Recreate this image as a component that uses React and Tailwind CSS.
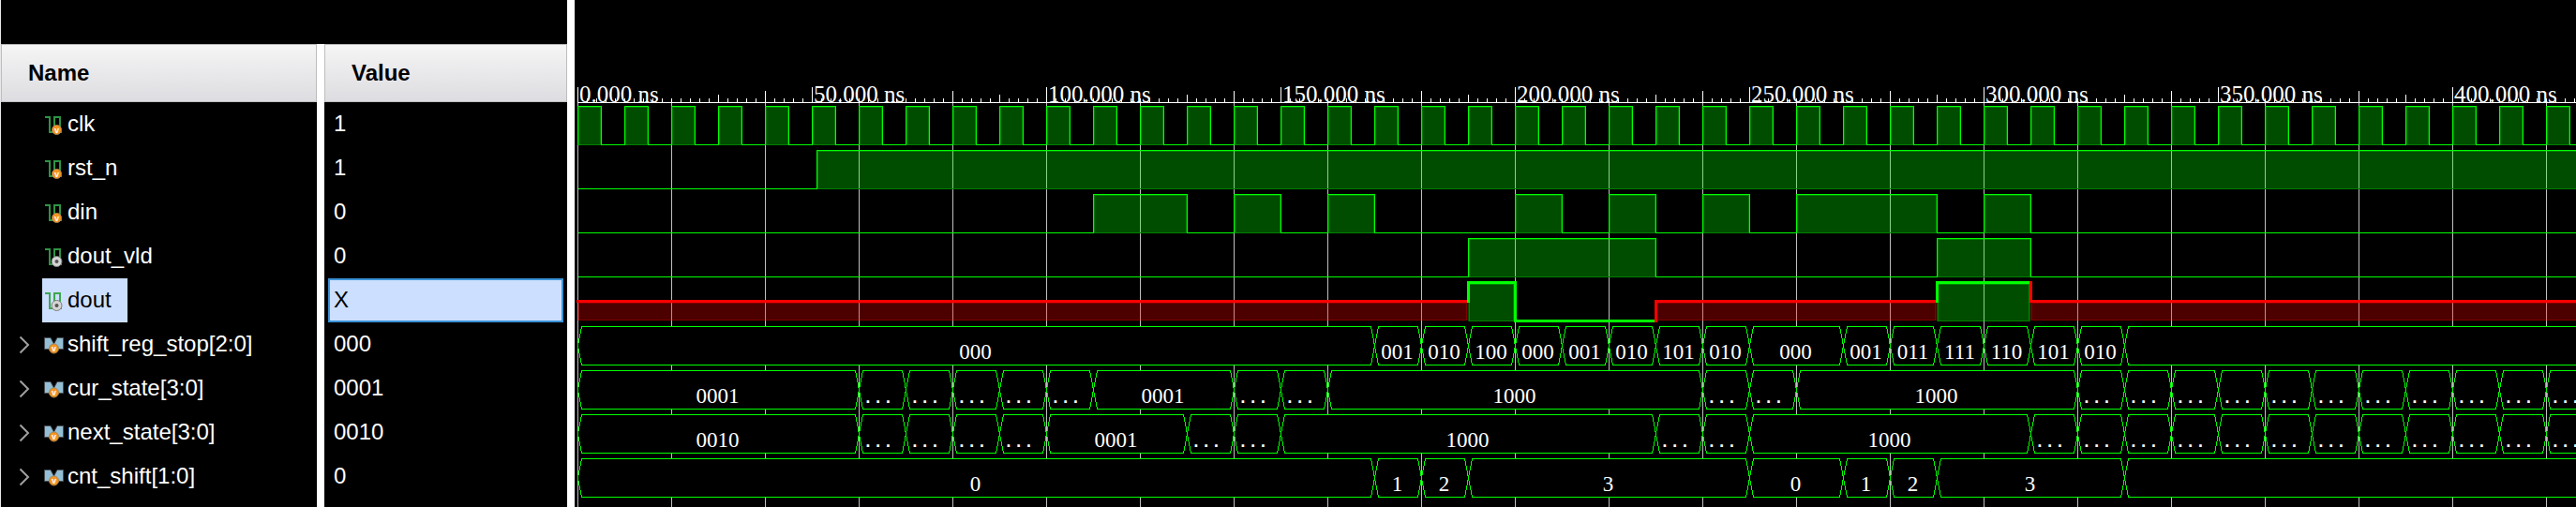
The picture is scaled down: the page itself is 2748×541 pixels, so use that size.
import React from "react";

const PX_PER_NS = 5;
const ORIGIN = 3;
const END = 430;
const ROW = 47;
const RULER = 109;
const LOW = 41;

const xOf = (t) => ORIGIN + t * PX_PER_NS;
const rowTop = (i) => RULER + i * ROW + 4;

const range = (from, to, step) => {
  const out = [];
  for (let t = from; t < to; t += step) out.push(t);
  return out;
};

const dots = (from, to) => range(from, to, 10).map((t) => [t, "..."]);

const SIGNALS = [
  { name: "clk", value: "1", kind: "bit", port: true, highs: range(0, END, 10).map((t) => [t, t + 5]) },
  { name: "rst_n", value: "1", kind: "bit", port: true, highs: [[51, END]] },
  {
    name: "din",
    value: "0",
    kind: "bit",
    port: true,
    highs: [[110, 130], [140, 150], [160, 170], [200, 210], [220, 230], [240, 250], [260, 290], [300, 310]],
  },
  { name: "dout_vld", value: "0", kind: "bit", highs: [[190, 230], [290, 310]] },
  {
    name: "dout",
    value: "X",
    kind: "logic",
    selected: true,
    steps: [[0, "X"], [190, "1"], [200, "0"], [230, "X"], [290, "1"], [310, "X"]],
  },
  {
    name: "shift_reg_stop[2:0]",
    value: "000",
    kind: "bus",
    steps: [
      [0, "000"], [170, "001"], [180, "010"], [190, "100"], [200, "000"], [210, "001"],
      [220, "010"], [230, "101"], [240, "010"], [250, "000"], [270, "001"], [280, "011"],
      [290, "111"], [300, "110"], [310, "101"], [320, "010"], [330, ""],
    ],
  },
  {
    name: "cur_state[3:0]",
    value: "0001",
    kind: "bus",
    steps: [
      [0, "0001"], ...dots(60, 110), [110, "0001"], ...dots(140, 160), [160, "1000"],
      ...dots(240, 260), [260, "1000"], ...dots(320, END),
    ],
  },
  {
    name: "next_state[3:0]",
    value: "0010",
    kind: "bus",
    steps: [
      [0, "0010"], ...dots(60, 100), [100, "0001"], ...dots(130, 150), [150, "1000"],
      ...dots(230, 250), [250, "1000"], ...dots(310, END),
    ],
  },
  {
    name: "cnt_shift[1:0]",
    value: "0",
    kind: "bus",
    steps: [[0, "0"], [170, "1"], [180, "2"], [190, "3"], [250, "0"], [270, "1"], [280, "2"], [290, "3"], [330, ""]],
  },
];

function VBadge({ cx, cy }) {
  return (
    <>
      <circle cx={cx} cy={cy} r="5" fill="#f7931e" stroke="#a8834f" strokeWidth="1" />
      <text x={cx} y={cy + 3} textAnchor="middle" fontSize="9" fontWeight="bold" fontFamily="Liberation Sans, sans-serif" fill="#fff">
        v
      </text>
    </>
  );
}

function SignalIcon({ port, selected }) {
  return (
    <svg width="21" height="22" viewBox="0 0 21 22" className="shrink-0" aria-hidden="true">
      <path d="M1 3H6V19H11V3H17V19H19" fill="none" stroke={selected ? "#3fa651" : "#2f9444"} strokeWidth="2" />
      {port ? (
        <VBadge cx={13.5} cy={16.5} />
      ) : (
        <>
          <circle cx="13.500" cy="16" r="5.500" fill="#d4d4d4" stroke="#7c7c7c" strokeWidth="1" />
          <circle cx="13.500" cy="16" r="2" fill="#555" />
        </>
      )}
    </svg>
  );
}

function BusIcon() {
  return (
    <svg width="21" height="22" viewBox="0 0 21 22" className="shrink-0" aria-hidden="true">
      <path d="M.5 3.500H7L10.500 10L14 3.500H20.500V15.500H.5Z" fill="#93bfd6" stroke="#4a4f55" strokeWidth="1" />
      <VBadge cx={10.5} cy={15} />
    </svg>
  );
}

function NamePanel() {
  return (
    <section className="flex shrink-0 flex-col border-l border-r-8 border-l-[#e8e8e8] border-r-white pt-[47px]">
      <table className="w-[604px] table-fixed border-separate border-spacing-0 text-left text-2xl">
        <colgroup>
          <col className="w-[345px]" />
          <col />
        </colgroup>
        <thead>
          <tr className="h-[62px] text-black">
            <th scope="col" className="border-r-8 border-white p-0 font-bold">
              <div className="flex h-[62px] items-center border border-[#bdbdbd] bg-linear-to-b from-[#f5f5f5] to-[#dddde1] pl-7">
                Name
              </div>
            </th>
            <th scope="col" className="p-0 font-bold">
              <div className="flex h-[62px] items-center border border-[#bdbdbd] bg-linear-to-b from-[#f5f5f5] to-[#dddde1] pl-7">
                Value
              </div>
            </th>
          </tr>
        </thead>
        <tbody>
          {SIGNALS.map((s) => (
            <tr key={s.name} className="h-[47px]">
              <td className="border-r-8 border-white p-0">
                <div className="flex h-[47px] items-center">
                  <div className="flex w-[44px] justify-center">
                    {s.kind === "bus" && (
                      <button type="button" aria-label={`Expand ${s.name}`} className="ml-1.5 flex">
                        <svg width="12" height="20" viewBox="0 0 12 20" aria-hidden="true">
                          <path d="M1.500 1.500L10 10L1.500 18.500" fill="none" stroke="#a0a0a0" strokeWidth="2" />
                        </svg>
                      </button>
                    )}
                  </div>
                  <div className={s.selected ? "flex h-[47px] items-center gap-1 bg-[#ccdfff] pr-[17px] pl-0.5 text-black" : "flex h-[47px] items-center gap-1 pl-0.5"}>
                    {s.kind === "bus" ? <BusIcon /> : <SignalIcon port={s.port} selected={s.selected} />}
                    <span className="pb-0.5">{s.name}</span>
                  </div>
                </div>
              </td>
              <td className="p-0">
                <div className={s.selected ? "mx-1 flex h-[47px] items-center border-2 border-[#3b93d6] bg-[#ccdfff] pl-1 text-black" : "flex h-[47px] items-center pl-2.5"}>
                  <span className="pb-0.5">{s.value}</span>
                </div>
              </td>
            </tr>
          ))}
        </tbody>
      </table>
      <div className="flex grow">
        <div className="w-[345px] border-r-8 border-white" />
      </div>
    </section>
  );
}

function Ruler() {
  return (
    <g>
      {range(0, END, 2).map((t) => {
        const rest = t % 50;
        const underLabel = rest > 0 && rest <= 20;
        let h = 4;
        if (rest === 0) h = 16;
        else if (underLabel) h = 4;
        else if (t % 20 === 0) h = 12;
        else if (t % 10 === 0) h = 8;
        return <rect key={t} x={xOf(t)} y={RULER - h} width="1" height={h} fill="#fff" />;
      })}
      <rect x={ORIGIN} y={RULER} width={END * PX_PER_NS} height="1" fill="#fff" />
      {range(0, END, 50).map((t) => (
        <text key={t} x={xOf(t) + 2} y={RULER} fontSize="25" fill="#fff">
          {t.toFixed(3)} ns
        </text>
      ))}
    </g>
  );
}

function Fill({ x1, x2, top, bottom, color }) {
  return (
    <>
      <rect x={x1} y={top} width={x2 - x1 + 1} height={bottom - top + 1} fill={color} fillOpacity="0.3" />
      <rect x={x1 + 1.5} y={top + 1.5} width={x2 - x1 - 2} height={bottom - top - 1} fill="none" stroke={color} strokeOpacity="0.3" />
    </>
  );
}

function BitWave({ top, highs }) {
  const low = top + LOW;
  let d = `M${ORIGIN + 0.5} ${low + 0.5}`;
  highs.forEach(([a, b]) => {
    d += `H${xOf(a) + 0.5}V${top + 0.5}H${xOf(b) + 0.5}V${low + 0.5}`;
  });
  d += `H${xOf(END)}`;
  return (
    <g>
      {highs.map(([a, b]) => (
        <Fill key={a} x1={xOf(a)} x2={xOf(b)} top={top} bottom={low} color="#00ff00" />
      ))}
      {highs.map(([a, b]) => (
        <rect key={a} x={xOf(a) + 1} y={low} width={xOf(b) - xOf(a) - 1} height="1" fill="#007f00" />
      ))}
      <path d={d} fill="none" stroke="#00ff00" />
    </g>
  );
}

function LogicWave({ top, steps }) {
  const level = { 1: top, X: top + 20, 0: top + LOW };
  return (
    <g>
      {steps.map(([t, v], i) => {
        const x1 = xOf(t);
        const x2 = xOf(i + 1 < steps.length ? steps[i + 1][0] : END);
        const color = v === "X" ? "#ff0000" : "#00ff00";
        const y = level[v] + 0.5;
        const prev = i > 0 ? level[steps[i - 1][1]] + 0.5 : y;
        const edge = prev < y ? prev - 1.5 : prev + 1.5;
        return (
          <g key={t}>
            {v !== "0" && (
              <Fill x1={x1} x2={x2 - 1} top={level[v] + 1} bottom={v === "X" ? top + LOW - 1 : top + LOW} color={color} />
            )}
            <path
              d={i > 0 ? `M${x1 + 0.5} ${edge}V${y}H${x2 + 1}` : `M${x1 - 1} ${y}H${x2 + 1}`}
              fill="none"
              stroke={color}
              strokeWidth="3"
            />
          </g>
        );
      })}
    </g>
  );
}

function BusWave({ top, steps }) {
  const y1 = top + 0.5;
  const y2 = top + LOW + 0.5;
  const mid = (y1 + y2) / 2;
  return (
    <g>
      {steps.map(([t, v], i) => {
        const x1 = xOf(t) + 0.5;
        const x2 = xOf(i + 1 < steps.length ? steps[i + 1][0] : END) + 0.5;
        return (
          <g key={t}>
            <path
              d={`M${x1} ${mid}L${x1 + 4} ${y1}H${x2 - 4}L${x2} ${mid}L${x2 - 4} ${y2}H${x1 + 4}Z`}
              fill="#000"
              stroke="#00ff00"
            />
            {v === "..." ? (
              <text x={x1 + 4} y={top + 35} fontSize="18" fontWeight="bold" fontFamily="Liberation Mono, monospace" fill="#fff">
                {v}
              </text>
            ) : (
              <text x={(x1 + x2) / 2 - 1} y={top + 35} textAnchor="middle" fontSize="23" fill="#fff">
                {v}
              </text>
            )}
          </g>
        );
      })}
    </g>
  );
}

function WavePanel() {
  return (
    <section className="min-w-0 grow overflow-hidden">
      <svg
        role="img"
        aria-label="Signal waveforms"
        className="block h-[541px] w-full"
        shapeRendering="crispEdges"
        fontFamily="Liberation Serif, serif"
      >
        {range(0, END, 20).map((t) => (
          <rect key={t} x={xOf(t)} y={RULER} width="1" height="432" fill="#c0c0c0" />
        ))}
        <Ruler />
        {SIGNALS.map((s, i) => {
          if (s.kind === "bit") return <BitWave key={s.name} top={rowTop(i)} highs={s.highs} />;
          if (s.kind === "logic") return <LogicWave key={s.name} top={rowTop(i)} steps={s.steps} />;
          return <BusWave key={s.name} top={rowTop(i)} steps={s.steps} />;
        })}
      </svg>
    </section>
  );
}

export default function App() {
  return (
    <main className="flex min-h-screen bg-black font-['Liberation_Sans',Arial,sans-serif] text-white">
      <NamePanel />
      <WavePanel />
    </main>
  );
}
